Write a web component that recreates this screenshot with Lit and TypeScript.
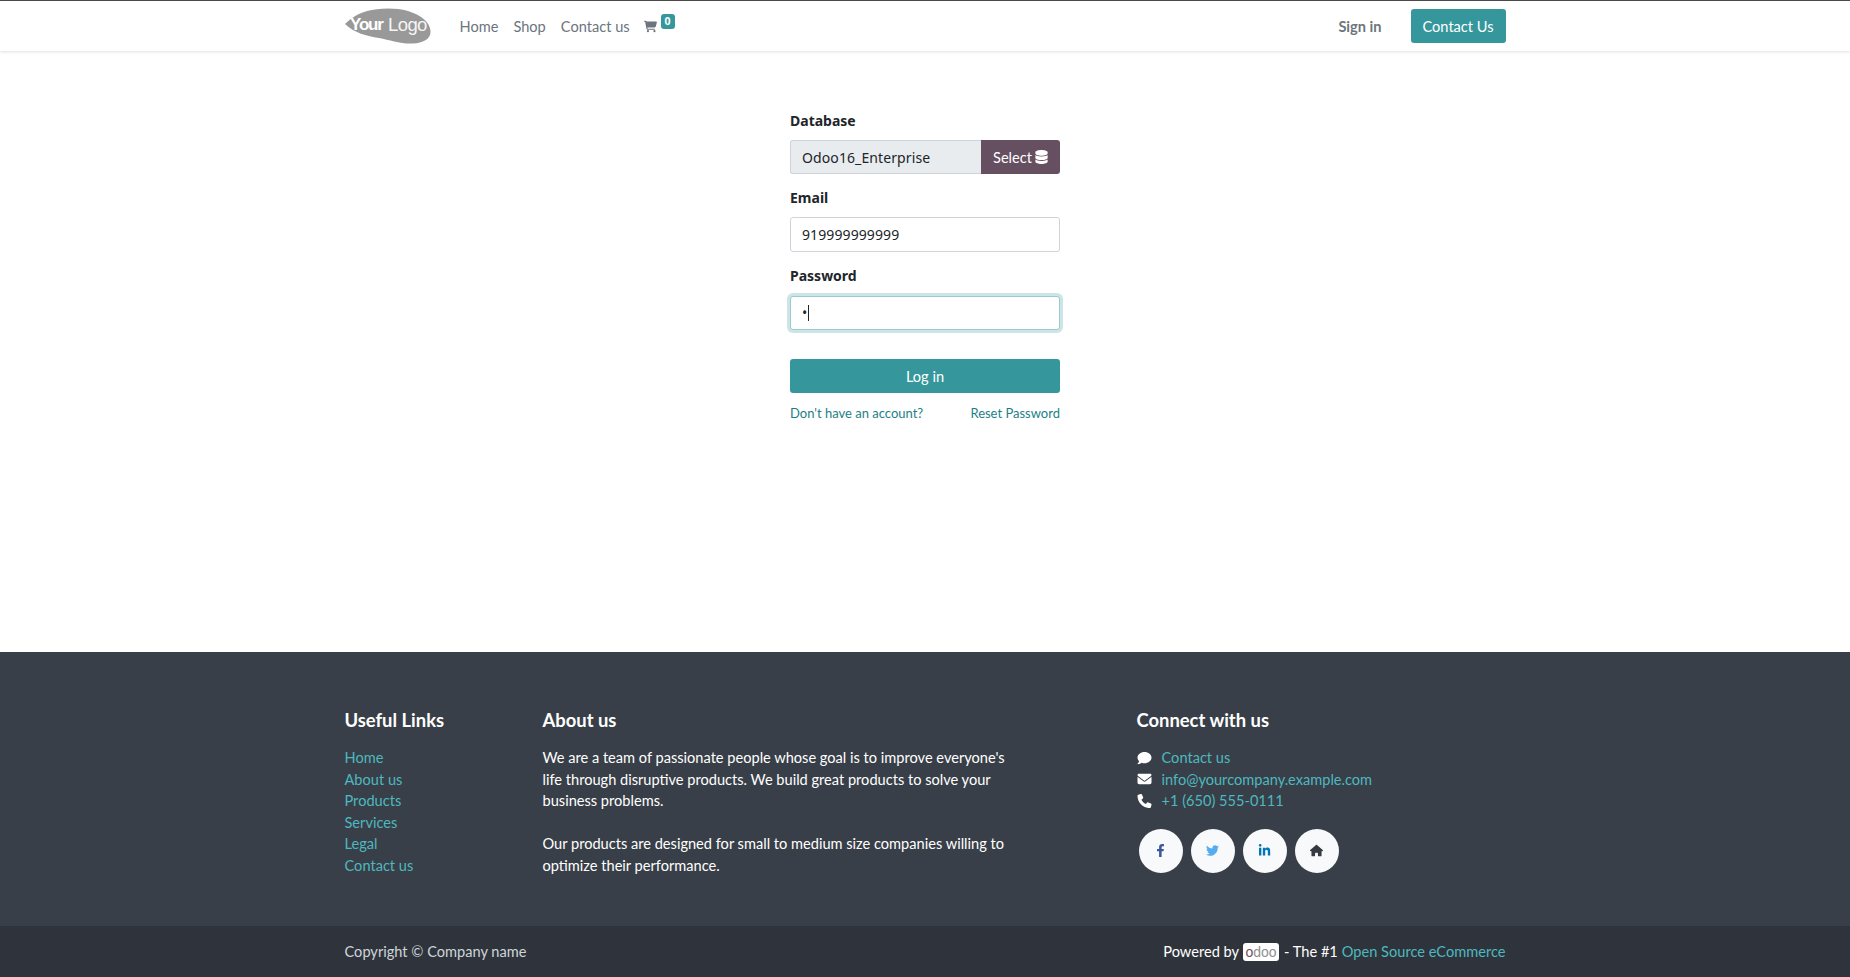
import { LitElement, html, css, svg } from "lit";
import { customElement } from "lit/decorators.js";

const icon = (vb: string, d: string, cls = "") =>
  html`<svg class="ic ${cls}" viewBox="${vb}" aria-hidden="true"><path d="${d}" fill="currentColor"></path></svg>`;

const CART = "M0 24C0 10.700 10.700 0 24 0H69.500C91.500 0 111 12.800 120.300 32H531.300C557.600 32 576.800 57 569.900 82.400L528.900 234.700C517.600 276.600 479.600 305.800 436.200 305.800H147.800L153.200 334.400C155.400 345.700 165.300 353.900 176.800 353.900H464C477.300 353.900 488 364.600 488 377.900S477.300 401.900 464 401.900H176.800C142.200 401.900 112.500 377.300 106 343.300L54.400 72.500C52.900 64.900 46.300 48 38.600 48H24C10.700 48 0 37.300 0 24ZM128 464A48 48 0 1 1 224 464A48 48 0 1 1 128 464ZM464 416A48 48 0 1 1 464 512A48 48 0 1 1 464 416Z";
const DB = "M448 80V128C448 172.200 347.700 208 224 208S0 172.200 0 128V80C0 35.800 100.300 0 224 0S448 35.800 448 80ZM393.200 214.700C413.600 207.400 432.300 198.100 448 186.600V288C448 332.200 347.700 368 224 368S0 332.200 0 288V186.600C15.700 198.200 34.400 207.400 54.800 214.700C98.800 230.400 159.100 240 224 240S349.200 230.400 393.200 214.700ZM0 346.600C15.700 358.200 34.400 367.400 54.800 374.700C98.800 390.400 159.100 400 224 400S349.200 390.400 393.200 374.700C413.600 367.400 432.300 358.100 448 346.600V432C448 476.200 347.700 512 224 512S0 476.200 0 432V346.600Z";
const COMMENT = "M256 32C114.600 32 0 125.100 0 240C0 289.600 21.400 335 57 370.700C44.500 421 2.700 466 2.200 466.500C0 468.800 -0.600 472.200 0.700 475.200C1.900 478.200 4.800 480 8 480C74.300 480 124 448.200 148.600 428.600C181.300 440.900 217.600 448 256 448C397.400 448 512 354.900 512 240S397.400 32 256 32Z";
const MAIL = "M48 64C21.500 64 0 85.500 0 112C0 127.100 7.100 141.300 19.200 150.400L236.800 313.600C248.200 322.100 263.800 322.100 275.200 313.600L492.800 150.400C504.900 141.300 512 127.100 512 112C512 85.500 490.500 64 464 64H48ZM0 176V384C0 419.300 28.700 448 64 448H448C483.300 448 512 419.300 512 384V176L294.400 339.200C271.600 356.300 240.400 356.300 217.600 339.200L0 176Z";
const PHONE = "M164.900 24.600C157.200 5.900 136.800 -4 117.300 1.300L29 25.400C11.500 30.200 -0.600 46 -0.600 64C-0.600 312.600 201 514.200 449.600 514.200C467.600 514.200 483.400 502.100 488.200 484.600L512.300 396.300C517.600 376.800 507.700 356.400 489 348.700L392.700 308.600C376.300 301.800 357.300 306.500 346.100 320.200L305.600 369.700C235 336.300 177.900 279.100 144.500 208.600L194 168.100C207.700 156.900 212.400 137.900 205.600 121.500L164.900 24.600Z";
const FB = "M279.140 288L293.360 195.340H204.450V135.210C204.450 109.860 216.870 85.150 256.690 85.150H297.110V6.260S260.430 0 225.360 0C152.140 0 104.280 44.380 104.280 124.720V195.340H22.890V288H104.280V512H204.450V288Z";
const TW = "M459.370 151.716C459.695 156.264 459.695 160.813 459.695 165.361C459.695 304.081 354.112 463.918 161.137 463.918C101.685 463.918 46.457 446.699 0 416.813C8.447 417.787 16.568 418.112 25.340 418.112C74.395 418.112 119.553 401.543 155.614 373.294C109.482 372.320 70.822 342.110 57.502 300.533C64 301.507 70.497 302.157 77.320 302.157C86.741 302.157 96.162 300.858 104.934 298.584C56.853 288.836 20.791 246.610 20.791 195.607V194.308C34.760 202.105 51.005 206.979 68.222 207.628C39.958 188.785 21.441 156.589 21.441 120.203C21.441 100.711 26.638 82.841 35.735 67.248C87.390 130.922 165.035 172.498 252.089 177.047C250.465 169.250 249.490 161.128 249.490 153.006C249.490 95.186 296.271 48.082 354.437 48.082C384.646 48.082 411.932 60.751 431.099 81.192C454.815 76.643 477.556 67.872 497.698 55.852C489.901 79.893 473.332 100.360 451.591 113.353C472.682 111.079 493.149 105.230 512 97.108C497.706 117.900 479.840 136.417 459.37 151.716Z";
const LI = "M100.280 448H7.400V148.900H100.280ZM53.790 108.100C24.090 108.100 0 83.500 0 53.800A53.790 53.790 0 0 1 107.580 53.800C107.580 83.500 83.480 108.100 53.790 108.100ZM447.900 448H355.220V302.400C355.220 267.700 354.520 223.200 306.930 223.200C258.640 223.200 251.240 260.900 251.240 299.900V448H158.460V148.900H247.540V189.700H248.840C261.240 166.200 291.530 141.400 336.720 141.400C430.700 141.400 447.980 203.300 447.980 283.700V448Z";
const HOME = "M575.800 255.500C575.800 273.500 560.800 287.600 543.800 287.600H511.800L512.500 447.700C512.500 450.400 512.300 453.100 512 455.800V472C512 494.100 494.100 512 472 512H456C454.900 512 453.800 512 452.700 511.900C451.300 512 449.900 512 448.500 512H392C369.900 512 352 494.100 352 472V384C352 366.300 337.700 352 320 352H256C238.300 352 224 366.300 224 384V472C224 494.100 206.100 512 184 512H104C81.900 512 64 494.100 64 472V287.600H32C14 287.600 0 273.600 0 255.500C0 246.500 3 238.500 10 231.500L266.400 8C273.400 1 281.400 0 288.400 0S303.400 2 309.500 7L564.800 231.500C572.800 238.500 576.800 246.500 575.800 255.500Z";

@customElement("app-root")
export class AppRoot extends LitElement {
  static styles = css`
    :host {
      display: flex;
      flex-direction: column;
      height: 977px;
      overflow: hidden;
      background: #fff;
      font-family: "Noto Sans", "Liberation Sans", sans-serif;
      font-size: 14px;
      color: #212529;
    }
    a { text-decoration: none; color: inherit; }
    .ic { display: block; width: 1em; height: 1em; }
    .wrap { width: 1161px; margin: 0 auto; display: flex; align-items: center; }

    header {
      height: 50px;
      flex: none;
      border-top: 1px solid #4a4a4a;
      box-shadow: 0 1px 3px rgba(0,0,0,.12);
      position: relative;
      font-family: "Lato", "Noto Sans", sans-serif;
    }
    header .wrap { height: 50px; }
    .logo { width: 86px; height: 37px; display: block; margin-top: 1px; }
    .logo text { font-family: "Liberation Sans", sans-serif; }
    nav { display: flex; align-items: center; margin-left: 29px; gap: 15px; color: #6c757d; font-size: 14.6px; }
    .cart { display: flex; align-items: center; margin-left: 14px; color: #6c757d; position: relative; font-size: 13px; }
    .badge {
      background: #35979c; color: #fff; font-size: 10.5px; font-weight: 700;
      border-radius: 3px; padding: 1px 4px; line-height: 13px; margin: -9px 0 0 4px;
      font-family: "Noto Sans", sans-serif;
    }
    .spacer { flex: 1; }
    .signin { font-weight: 700; color: #6c757d; font-size: 14.6px; margin-right: 29px; }
    .contact {
      background: #35979c; color: #fff; border-radius: 3px; width: 95px; height: 34px;
      display: flex; align-items: center; justify-content: center; font-size: 14.6px;
    }

    main { flex: 1; }
    form { width: 270px; margin: 0 auto; padding-top: 60px; display: flex; flex-direction: column; }
    label { font-weight: 700; line-height: 20px; font-size: 14px; display: block; margin-bottom: 9px; }
    .group { display: flex; height: 34px; margin-bottom: 14px; }
    .dbname {
      flex: 1; background: #e9ecef; border: 1px solid #ced4da; border-right: 0;
      border-radius: 3px 0 0 3px; padding: 0 11px; display: flex; align-items: center;
      letter-spacing: .1px;
    }
    .select {
      width: 79px; background: #654f60; color: #fff; border-radius: 0 3px 3px 0;
      display: flex; align-items: center; justify-content: center; gap: 3px;
      font-family: "Lato", sans-serif; font-size: 14.6px;
    }
    .select .ic { width: 13px; height: 14px; }
    .input {
      height: 35px; box-sizing: border-box; border: 1px solid #ced4da; border-radius: 3px;
      padding: 0 11px; display: flex; align-items: center; background: #fff; margin-bottom: 14px;
      letter-spacing: .1px;
    }
    .input.focus {
      height: 34px; border-color: #9acbce; box-shadow: 0 0 0 3px rgba(53,151,156,.25);
      margin-bottom: 29px; margin-top: 1px;
    }
    .dot { font-size: 14px; line-height: 1; }
    .caret { width: 1px; height: 16px; background: #212529; margin-left: 1px; }
    .login {
      height: 34px; background: #35979c; color: #fff; border-radius: 3px;
      display: flex; align-items: center; justify-content: center;
      font-family: "Lato", sans-serif; font-size: 14.6px;
    }
    .links {
      display: flex; justify-content: space-between; margin-top: 11px; line-height: 18px;
      color: #1d7f86; font-family: "Lato", sans-serif; font-size: 13px;
    }

    footer { flex: none; color: #fff; font-family: "Lato", "Noto Sans", sans-serif; font-size: 14.6px; }
    .top { background: #393f48; height: 274px; box-sizing: border-box; padding-top: 56px; }
    .top .wrap { align-items: flex-start; }
    .c1 { width: 198px; }
    .c2 { width: 594px; }
    h5 { margin: 0 0 15px; font-size: 18.4px; line-height: 24px; font-weight: 700; }
    .list { line-height: 21.6px; color: #4db8bf; }
    .list div { height: 21.6px; }
    .c2 p { margin: 0 0 21.6px; line-height: 21.6px; width: 480px; }
    .row { display: flex; align-items: center; height: 21.6px; gap: 10px; color: #4db8bf; }
    .row .ic { color: #fff; width: 15px; height: 14px; }
    .social { display: flex; gap: 8px; margin: 17px 0 0 2px; }
    .social a {
      width: 44px; height: 44px; border-radius: 50%; background: #f8f9fa;
      display: flex; align-items: center; justify-content: center; font-size: 13px;
    }
    .fb { color: #3b5998; } .tw { color: #55acee; } .li { color: #0077b5; } .ho { color: #343a40; }
    .bottom { background: #2f343c; height: 51px; }
    .bottom .wrap { height: 51px; justify-content: space-between; }
    .copy { color: #ced4da; }
    .pow { display: flex; align-items: center; }
    .odoo {
      background: #fff; border-radius: 3px; padding: 0 3px; margin: 0 5px 0 4px; height: 18px; width: 36px;
      box-sizing: border-box; display: flex; align-items: center; justify-content: center;
      font-family: "Liberation Sans", sans-serif; font-size: 14px; color: #8f8f8f; line-height: 18px;
    }
    .odoo b { color: #714b67; font-weight: 400; }
    .teal { color: #4db8bf; margin-left: 4px; }
  `;

  render() {
    return html`
      <header>
        <div class="wrap">
          <svg class="logo" viewBox="0 0 86 37" role="img" aria-label="YourLogo">
            <path fill="#999" d="M0 16C5 11 12 6 22 3C34 0 50 -0.500 63 3C76 7 85 14 85.500 23C86 31 78 35 68 35.500C55 36 45 32 34 30C22 28 9 25 0 16Z"></path>
            <text x="5" y="22" font-size="17" font-weight="700" fill="#fff" letter-spacing="-1.200">Your</text>
            <text x="43" y="23" font-size="18.500" fill="#fff" letter-spacing="-.6" opacity=".9">Logo</text>
          </svg>
          <nav>
            <a>Home</a><a>Shop</a><a>Contact us</a>
          </nav>
          <div class="cart">${icon("0 0 576 512", CART)}<span class="badge">0</span></div>
          <div class="spacer"></div>
          <a class="signin">Sign in</a>
          <a class="contact">Contact Us</a>
        </div>
      </header>
      <main>
        <form>
          <label>Database</label>
          <div class="group">
            <div class="dbname">Odoo16_Enterprise</div>
            <a class="select">Select ${icon("0 0 448 512", DB)}</a>
          </div>
          <label>Email</label>
          <div class="input">919999999999</div>
          <label>Password</label>
          <div class="input focus"><span class="dot">•</span><span class="caret"></span></div>
          <a class="login">Log in</a>
          <div class="links"><a>Don't have an account?</a><a>Reset Password</a></div>
        </form>
      </main>
      <footer>
        <div class="top">
          <div class="wrap">
            <div class="c1">
              <h5>Useful Links</h5>
              <div class="list">
                <div>Home</div><div>About us</div><div>Products</div><div>Services</div><div>Legal</div><div>Contact us</div>
              </div>
            </div>
            <div class="c2">
              <h5>About us</h5>
              <p>We are a team of passionate people whose goal is to improve everyone's life through disruptive products. We build great products to solve your business problems.</p>
              <p>Our products are designed for small to medium size companies willing to optimize their performance.</p>
            </div>
            <div class="c3">
              <h5>Connect with us</h5>
              <div class="row">${icon("0 0 512 512", COMMENT)}<span>Contact us</span></div>
              <div class="row">${icon("0 0 512 512", MAIL)}<span>info@yourcompany.example.com</span></div>
              <div class="row">${icon("0 0 512 512", PHONE)}<span>+1 (650) 555-0111</span></div>
              <div class="social">
                <a class="fb">${icon("0 0 320 512", FB)}</a>
                <a class="tw">${icon("0 0 512 512", TW)}</a>
                <a class="li">${icon("0 0 448 512", LI)}</a>
                <a class="ho">${icon("0 0 576 512", HOME)}</a>
              </div>
            </div>
          </div>
        </div>
        <div class="bottom">
          <div class="wrap">
            <span class="copy">Copyright © Company name</span>
            <span class="pow">Powered by <span class="odoo"><b>o</b>doo</span> - The #1 <a class="teal">Open Source eCommerce</a></span>
          </div>
        </div>
      </footer>
    `;
  }
}
